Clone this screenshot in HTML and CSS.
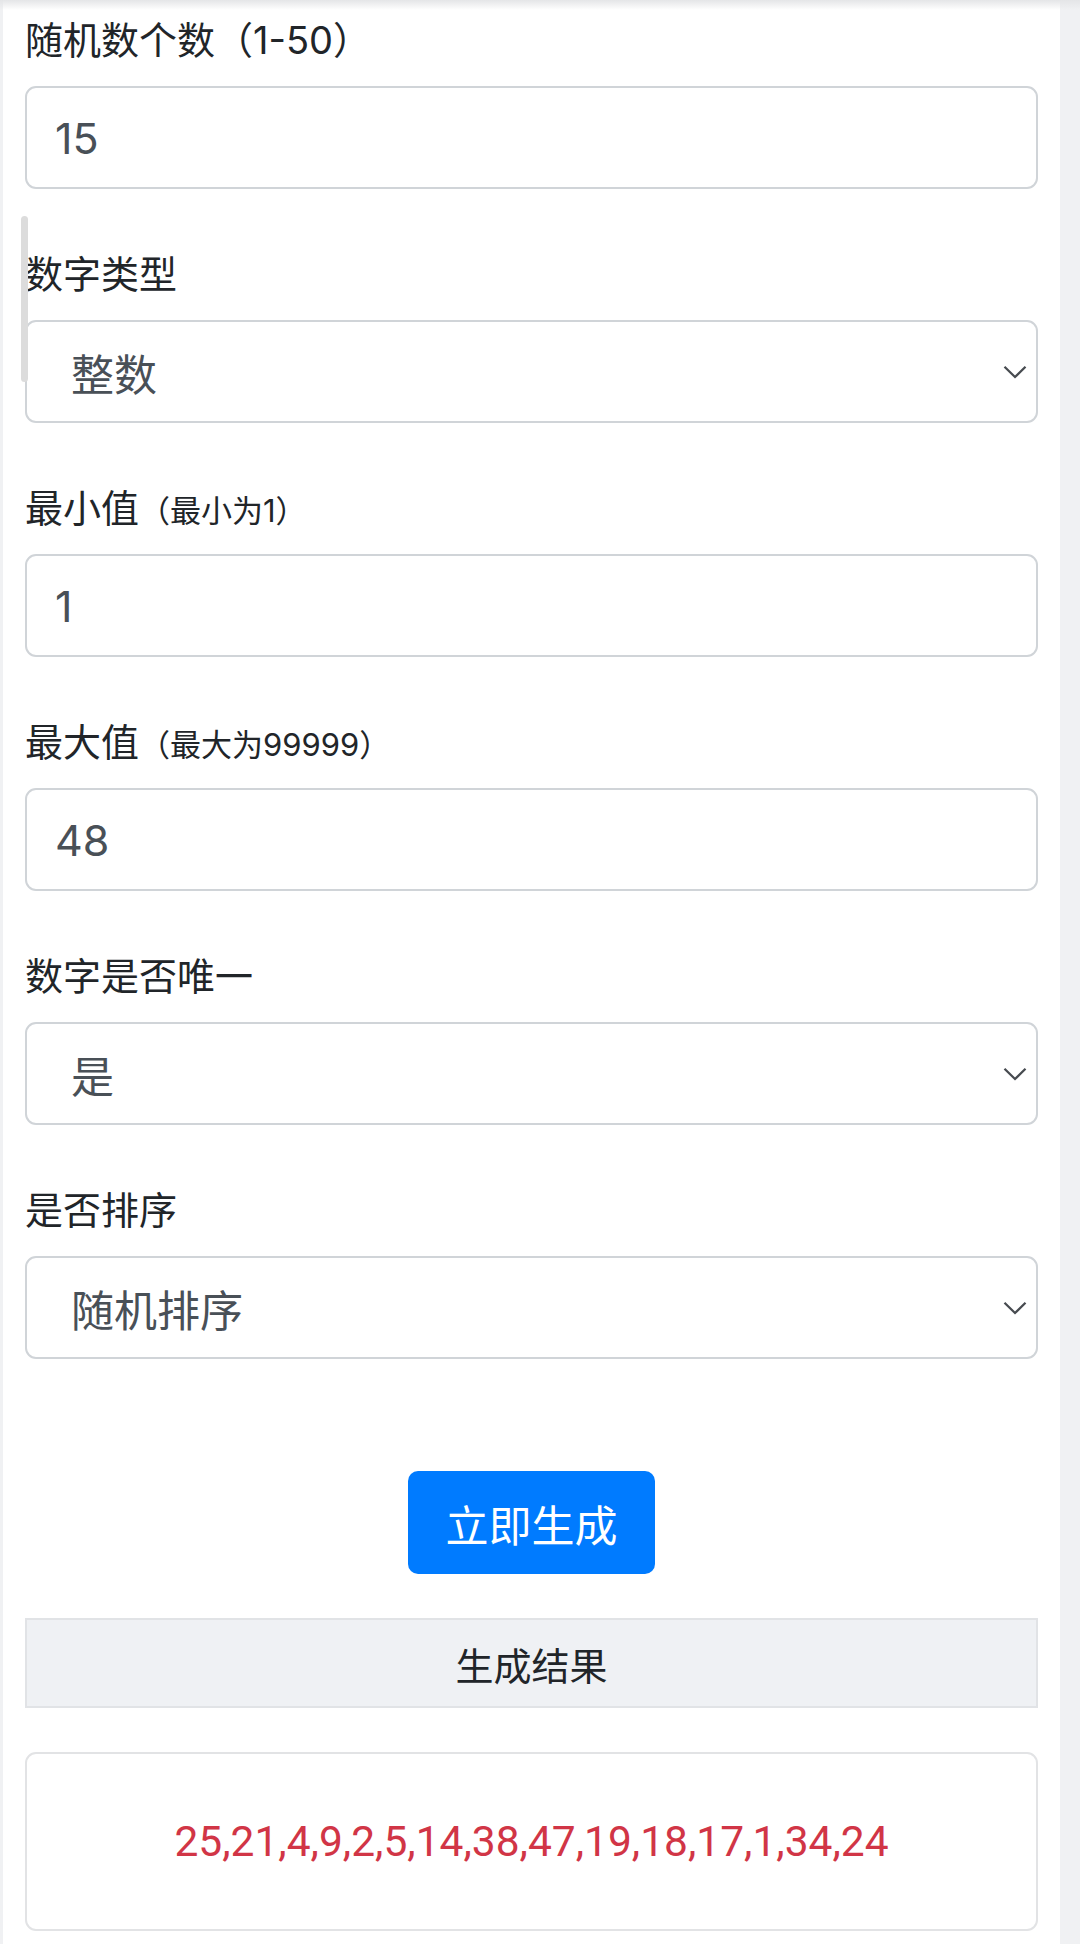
FILE: index.html
```html
<!DOCTYPE html>
<html lang="zh-CN">
<head>
<meta charset="utf-8">
<title>随机数生成</title>
<link rel="stylesheet" href="styles.css">
</head>
<body>
<div class="topshade"></div>
<div class="scroll-thumb"></div>
<main class="page">
  <div class="group">
    <label class="label">随机数个数（1-50）</label>
    <div class="field">15</div>
  </div>
  <div class="group">
    <label class="label">数字类型</label>
    <div class="field select" role="combobox">
      <span>整数</span>
      <svg class="chev" width="24" height="14" viewBox="0 0 24 14"><path d="M1.5 1.8 L12 12 L22.5 1.8" fill="none" stroke="#474b50" stroke-width="2.3"/></svg>
    </div>
  </div>
  <div class="group">
    <label class="label">最小值<small>（最小为1）</small></label>
    <div class="field">1</div>
  </div>
  <div class="group">
    <label class="label">最大值<small>（最大为99999）</small></label>
    <div class="field">48</div>
  </div>
  <div class="group">
    <label class="label">数字是否唯一</label>
    <div class="field select" role="combobox">
      <span>是</span>
      <svg class="chev" width="24" height="14" viewBox="0 0 24 14"><path d="M1.5 1.8 L12 12 L22.5 1.8" fill="none" stroke="#474b50" stroke-width="2.3"/></svg>
    </div>
  </div>
  <div class="group">
    <label class="label">是否排序</label>
    <div class="field select" role="combobox">
      <span>随机排序</span>
      <svg class="chev" width="24" height="14" viewBox="0 0 24 14"><path d="M1.5 1.8 L12 12 L22.5 1.8" fill="none" stroke="#474b50" stroke-width="2.3"/></svg>
    </div>
  </div>
  <div class="actions">
    <button class="btn" type="button">立即生成</button>
  </div>
  <div class="result-head">生成结果</div>
  <div class="result">25,21,4,9,2,5,14,38,47,19,18,17,1,34,24</div>
</main>
</body>
</html>
```
FILE: styles.css
```css
html, body {
  margin: 0;
  padding: 0;
}
body {
  background: #f0f1f3;
  font-family: Roboto, "Noto Sans CJK SC", sans-serif;
  color: #212529;
  width: 1080px;
  height: 1944px;
  overflow: hidden;
}
.page {
  box-sizing: border-box;
  width: 1057px;
  height: 1944px;
  margin-left: 3px;
  background: #fff;
  padding: 13px 22px 0;
  display: flex;
  flex-direction: column;
}
.group {
  display: flex;
  flex-direction: column;
  margin-bottom: 58px;
}
.label {
  display: block;
  font-family: Inter, "Noto Sans CJK SC", sans-serif;
  font-size: 38px;
  line-height: 55px;
  height: 55px;
  margin-bottom: 18px;
  color: #212529;
}
.label small {
  font-size: 31px;
}
.field {
  box-sizing: border-box;
  height: 103px;
  border: 2px solid #d0d4d8;
  border-radius: 11px;
  padding: 0 0 0 28px;
  font-family: Inter, "Noto Sans CJK SC", sans-serif;
  font-size: 43px;
  color: #495057;
  display: flex;
  align-items: center;
}
.select {
  padding-left: 44px;
  padding-right: 9px;
  justify-content: space-between;
}
.chev {
  display: block;
}
.actions {
  display: flex;
  justify-content: center;
  margin-top: 54px;
  margin-bottom: 44px;
}
.btn {
  box-sizing: border-box;
  height: 103px;
  width: 247px;
  padding: 0;
  border: none;
  border-radius: 10px;
  background: #007bff;
  color: #fff;
  font-family: Roboto, "Noto Sans CJK SC", sans-serif;
  font-size: 43px;
}
.result-head {
  box-sizing: border-box;
  height: 90px;
  background: #eff1f4;
  border: 2px solid #e1e3e6;
  display: flex;
  align-items: center;
  justify-content: center;
  font-size: 38px;
  color: #212529;
  margin-bottom: 44px;
}
.result {
  box-sizing: border-box;
  height: 179px;
  border: 2px solid #e2e3e5;
  border-radius: 11px;
  display: flex;
  align-items: center;
  justify-content: center;
  font-size: 42.5px;
  color: #d13546;
}
.topshade {
  position: absolute;
  top: 0;
  left: 0;
  width: 1080px;
  height: 10px;
  background: linear-gradient(#e4e5e7, rgba(255, 255, 255, 0));
  z-index: 2;
}
.scroll-thumb {
  position: absolute;
  left: 21px;
  top: 216px;
  width: 7px;
  height: 166px;
  border-radius: 4px;
  background: #dcdcdc;
  z-index: 2;
}
```
